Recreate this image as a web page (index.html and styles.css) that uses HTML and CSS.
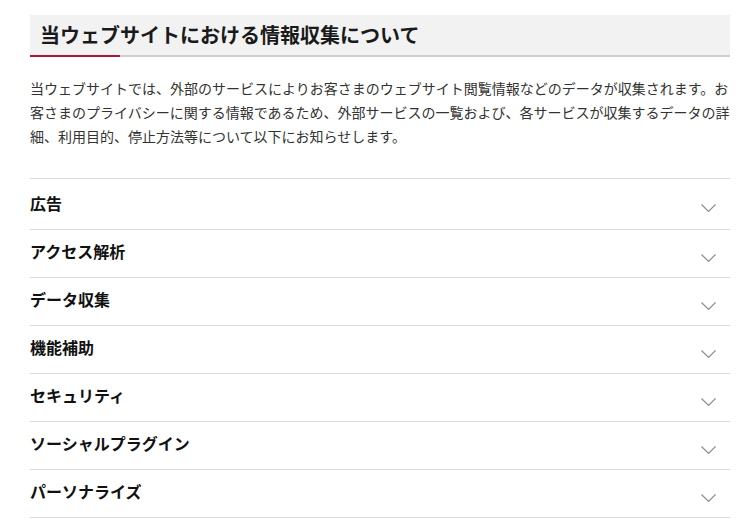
FILE: index.html
```html
<!DOCTYPE html>
<html lang="ja">
<head>
<meta charset="utf-8">
<link rel="stylesheet" href="styles.css">
</head>
<body>
<main class="page">
  <h1 class="title">当ウェブサイトにおける情報収集について</h1>
  <p class="lead">当ウェブサイトでは、外部のサービスによりお客さまのウェブサイト閲覧情報などのデータが収集されます。お客さまのプライバシーに関する情報であるため、外部サービスの一覧および、各サービスが収集するデータの詳細、利用目的、停止方法等について以下にお知らせします。</p>
  <ul class="acc">
    <li class="item first"><span class="label">広告</span><svg class="chev" width="15" height="8" viewBox="0 0 15 8"><path d="M0.5 0.5 L7.5 7.5 L14.5 0.5" fill="none" stroke="#8a8a8a" stroke-width="1.1"/></svg></li>
    <li class="item"><span class="label">アクセス解析</span><svg class="chev" width="15" height="8" viewBox="0 0 15 8"><path d="M0.5 0.5 L7.5 7.5 L14.5 0.5" fill="none" stroke="#8a8a8a" stroke-width="1.1"/></svg></li>
    <li class="item"><span class="label">データ収集</span><svg class="chev" width="15" height="8" viewBox="0 0 15 8"><path d="M0.5 0.5 L7.5 7.5 L14.5 0.5" fill="none" stroke="#8a8a8a" stroke-width="1.1"/></svg></li>
    <li class="item"><span class="label">機能補助</span><svg class="chev" width="15" height="8" viewBox="0 0 15 8"><path d="M0.5 0.5 L7.5 7.5 L14.5 0.5" fill="none" stroke="#8a8a8a" stroke-width="1.1"/></svg></li>
    <li class="item"><span class="label">セキュリティ</span><svg class="chev" width="15" height="8" viewBox="0 0 15 8"><path d="M0.5 0.5 L7.5 7.5 L14.5 0.5" fill="none" stroke="#8a8a8a" stroke-width="1.1"/></svg></li>
    <li class="item"><span class="label">ソーシャルプラグイン</span><svg class="chev" width="15" height="8" viewBox="0 0 15 8"><path d="M0.5 0.5 L7.5 7.5 L14.5 0.5" fill="none" stroke="#8a8a8a" stroke-width="1.1"/></svg></li>
    <li class="item"><span class="label">パーソナライズ</span><svg class="chev" width="15" height="8" viewBox="0 0 15 8"><path d="M0.5 0.5 L7.5 7.5 L14.5 0.5" fill="none" stroke="#8a8a8a" stroke-width="1.1"/></svg></li>
  </ul>
</main>
</body>
</html>
```

FILE: styles.css
```css
* { box-sizing: border-box; }
html, body { margin: 0; padding: 0; background: #fff; }
body {
  font-family: "Noto Sans CJK JP", "Noto Sans", sans-serif;
  color: #222;
}
.page {
  width: 700px;
  margin-left: 30px;
  padding-top: 15px;
}
.title {
  position: relative;
  margin: 0;
  height: 42px;
  padding: 0 0 0 10px;
  background: #f2f2f2;
  border-bottom: 2px solid #cfcfcf;
  font-size: 20px;
  font-weight: 700;
  line-height: 40px;
  color: #1a1a1a;
}
.title::after {
  content: "";
  position: absolute;
  left: 0;
  bottom: -2px;
  width: 90px;
  height: 2px;
  background: #a8173b;
}
.lead {
  margin: 19px 0 0;
  font-size: 14px;
  line-height: 24px;
  color: #333;
}
.acc {
  list-style: none;
  margin: 30px 0 0;
  padding: 0;
  border-top: 1px solid #dcdcdc;
}
.item {
  display: flex;
  align-items: center;
  justify-content: space-between;
  height: 48px;
  padding: 0 14px 0 0;
  border-bottom: 1px solid #dcdcdc;
}
.item.first { height: 51px; }
.label {
  font-size: 16px;
  font-weight: 700;
  color: #111;
  line-height: 1;
  margin-top: -6px;
}
.item.first .label { margin-top: -2px; }
.chev { display: block; margin-top: 8px; }
```
